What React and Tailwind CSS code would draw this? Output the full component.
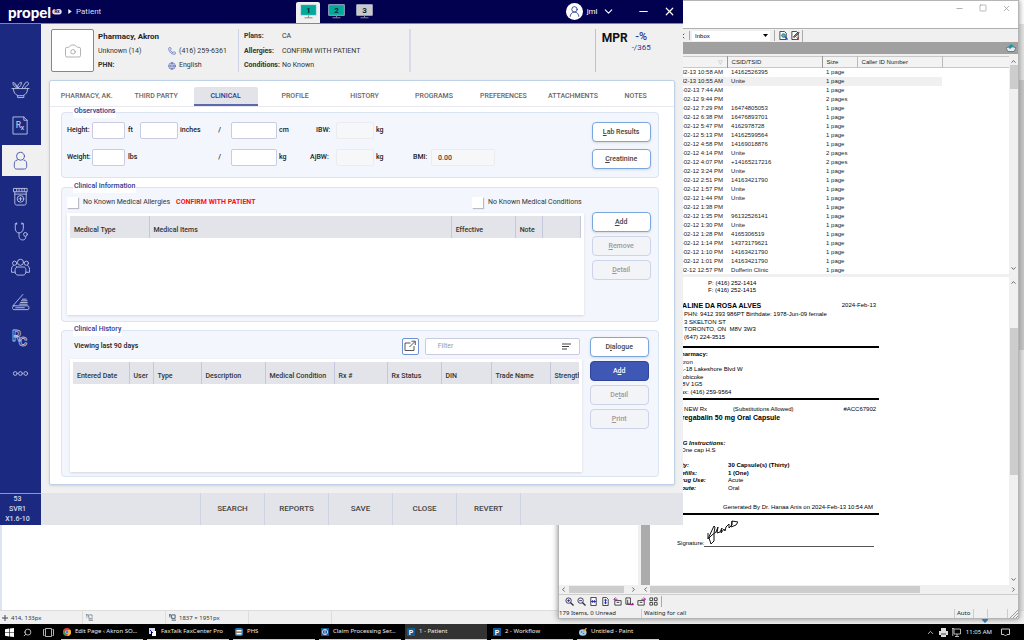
import { Camera, ChevronDown, ChevronLeft, ChevronRight, ChevronUp, Globe, Minus, Phone, Search, Square, UserRound, X } from "lucide-react";

const tabs = ["PHARMACY, AK.", "THIRD PARTY", "CLINICAL", "PROFILE", "HISTORY", "PROGRAMS", "PREFERENCES", "ATTACHMENTS", "NOTES"];

const faxes = [
  ["2024-02-13 10:58 AM", "14162526395", "1 page"],
  ["2024-02-13 10:55 AM", "Unite", "1 page"],
  ["2024-02-13 7:44 AM", "", "1 page"],
  ["2024-02-12 9:44 PM", "", "2 pages"],
  ["2024-02-12 7:29 PM", "16474805053", "1 page"],
  ["2024-02-12 6:38 PM", "16476893701", "1 page"],
  ["2024-02-12 5:47 PM", "4162978728", "1 page"],
  ["2024-02-12 5:13 PM", "14162599564", "1 page"],
  ["2024-02-12 4:58 PM", "14169018876", "1 page"],
  ["2024-02-12 4:14 PM", "Unite", "2 pages"],
  ["2024-02-12 4:07 PM", "+14165217216", "2 pages"],
  ["2024-02-12 3:24 PM", "Unite", "1 page"],
  ["2024-02-12 2:51 PM", "14163421790", "1 page"],
  ["2024-02-12 1:57 PM", "Unite", "1 page"],
  ["2024-02-12 1:44 PM", "Unite", "1 page"],
  ["2024-02-12 1:38 PM", "", "1 page"],
  ["2024-02-12 1:35 PM", "96132526141", "1 page"],
  ["2024-02-12 1:30 PM", "Unite", "1 page"],
  ["2024-02-12 1:28 PM", "4165306519", "1 page"],
  ["2024-02-12 1:14 PM", "14373179621", "1 page"],
  ["2024-02-12 1:10 PM", "14163421790", "1 page"],
  ["2024-02-12 1:01 PM", "14163421790", "1 page"],
  ["2024-02-12 12:57 PM", "Dufferin Clinic", "1 page"],
];

/* ---------- Sidebar icons ---------- */

function Glyph({ children }) {
  return (
    <svg viewBox="0 0 20 20" className="h-[19px] w-[19px]" fill="none" stroke="currentColor" strokeWidth="1" strokeLinecap="round" strokeLinejoin="round">
      {children}
    </svg>
  );
}

const sideItems = [
  {
    name: "Dispensary",
    icon: (
      <Glyph>
        <path d="M1 9h18M2.500 9c0 4 2 6.500 5 7.500h5c3-1 5-3.500 5-7.500M7 16.500v2h6.500v-2M11.500 9l3.500-6c1-1.600 3.800-.8 3.500 1-.1.900-.8 1.400-1.700 1.600L14 9M7 9C7 6 5 3.500 2 2.500 2 5 3 7.500 7 8.500M7 8c0-3 1-5 4-5.500 0 2.500-1 4.500-4 6M4 4.500l2.500 3" />
      </Glyph>
    ),
  },
  {
    name: "Prescriptions",
    icon: (
      <Glyph>
        <path d="M2.500 1h11l3.500 3.500V19H2.500zM13.500 1v3.500H17" />
        <text x="5" y="13" fontSize="9" stroke="none" fill="currentColor" fontWeight="500" fontFamily="Roboto, sans-serif">R<tspan x="10" y="15" fontSize="8">x</tspan></text>
      </Glyph>
    ),
  },
  {
    name: "Patients",
    active: true,
    icon: (
      <Glyph>
        <circle cx="10" cy="5.500" r="4.200" />
        <path d="M6.500 9.500C4 9.500 3.500 12 3.500 14v2.500c0 1.500 1 2.500 2.500 2.500h8c1.500 0 2.500-1 2.500-2.500V14c0-2-.5-4.500-3-4.500" />
      </Glyph>
    ),
  },
  {
    name: "Drugs",
    icon: (
      <Glyph>
        <path d="M3 1.500h14v3.500H3zM6 2v2.500M8.500 2v2.500M11.500 2v2.500M14 2v2.500M4 5v12c0 1.200.8 2 2 2h8c1.200 0 2-.8 2-2V5M4 7.500h12" />
        <circle cx="10" cy="12.500" r="3.500" />
        <path d="M10 10.800v3.400M8.300 12.500h3.400" />
      </Glyph>
    ),
  },
  {
    name: "Doctors",
    icon: (
      <Glyph>
        <path d="M6 1.500H4.500v5c0 3 1.500 5 4 5s4.500-2 4.500-5v-5h-1.500M6 1v1.500M11.500 1v1.500M8.500 11.500V15c0 5 7 5 7 1v-.5" />
        <circle cx="15.200" cy="13" r="2" />
      </Glyph>
    ),
  },
  {
    name: "Groups",
    icon: (
      <Glyph>
        <circle cx="10" cy="4.500" r="3.200" />
        <circle cx="3.800" cy="5.500" r="2.200" />
        <circle cx="16.200" cy="5.500" r="2.200" />
        <path d="M6 9.500h8c1.200.5 1.700 2 1.700 4 0 3-1 4.500-3 4.500H7.300c-2 0-3-1.500-3-4.500 0-2 .5-3.500 1.700-4zM2.500 8C.5 9 .3 11 .5 15h3.800M17.500 8c2 1 2.200 3 2 7h-3.800" />
      </Glyph>
    ),
  },
  {
    name: "Scan",
    icon: (
      <Glyph>
        <path d="M12.500 1.500L2 13.500M3 13.500h15c1.200 0 1.200 4 0 4H3c-2 0-2-4 0-4zM9 11.800h8M10 10h7M11 8.200h6M12 6.500h4M5 15.500h9" />
      </Glyph>
    ),
  },
  {
    name: "Reconciliation",
    icon: (
      <Glyph>
        <text x="1" y="13" fontSize="15" strokeWidth=".8" fontWeight="700" fontFamily="Roboto, sans-serif">R<tspan x="8" y="18" fontSize="14">C</tspan></text>
      </Glyph>
    ),
  },
  {
    name: "More",
    icon: (
      <Glyph>
        <circle cx="4.500" cy="10" r="2" />
        <circle cx="10" cy="10" r="2" />
        <circle cx="15.500" cy="10" r="2" />
      </Glyph>
    ),
  },
];

function Monitor({ n, fill }) {
  return (
    <svg viewBox="0 0 17 15" className="h-[15px] w-[17px]">
      <rect x=".75" y=".75" width="15.500" height="10.500" fill={fill} stroke="#d8dde6" strokeWidth=".7" />
      <path d="M8.500 11.500v2M4.500 13.800h8" stroke="#8a8d94" strokeWidth="1" />
      <text x="8.500" y="8.800" fontSize="8" fontWeight="700" textAnchor="middle" fill="#10252c" fontFamily="Roboto, sans-serif">{n}</text>
    </svg>
  );
}

function Accel({ text, at = 0 }) {
  return (
    <span>
      {text.slice(0, at)}
      <span className="underline">{text[at]}</span>
      {text.slice(at + 1)}
    </span>
  );
}

function Btn({ text, at, primary, disabled }) {
  const look = primary
    ? "border-[#2f459c] bg-[#3f57b5] text-white"
    : disabled
      ? "border-[#cdd3ea] bg-[#f3f4f7] text-[#9a9a9e]"
      : "border-[#79a7dd] bg-white text-[#444] shadow-sm";
  return (
    <button disabled={disabled} className={"h-[20px] w-[59px] rounded border text-[7px] leading-[8px] font-medium " + look}>
      <Accel text={text} at={at} />
    </button>
  );
}

function Panel({ title, className, children }) {
  return (
    <fieldset className={"min-w-0 rounded-sm border border-[#dbe5f2] bg-[#f3f6fc] " + className}>
      <legend className="ml-[11px] bg-white px-px pb-[3px] text-[7px] leading-[8px] font-medium text-[#2b3a8f]">{title}</legend>
      {children}
    </fieldset>
  );
}

const box = "h-[17px] w-full rounded-xs border border-[#c9cbe0] bg-white px-1 text-[7px]";
const roBox = "h-[17px] w-full rounded-xs border border-[#ececf0] bg-[#f6f7f9] px-1.5 text-[7px] text-[#444]";
const th = "border-r border-[#c5c7dc] px-1 pt-[7px] text-left font-medium whitespace-nowrap";

/* ---------- Propel window ---------- */

function TitleBar() {
  return (
    <header className="flex h-6 items-center border-b border-[#7f80b5] bg-[#010150] text-white">
      <div className="flex w-[68px] items-center gap-px pl-2">
        <span className="font-[Lato,sans-serif] text-[15px] leading-[16px] font-black">propel</span>
        <svg viewBox="0 0 10 7" className="h-[7px] w-[10px]">
          <rect x=".3" y="1" width="9.400" height="5.400" rx="2.700" fill="#dfe1f2" />
          <text x="5" y="5.400" fontSize="4.500" fontWeight="700" textAnchor="middle" fill="#010150" fontFamily="Roboto, sans-serif">Rx</text>
        </svg>
      </div>
      <svg viewBox="0 0 4 6" className="mr-1 h-[5px] w-[4px]"><path d="M0 0l4 3-4 3z" fill="#fff" /></svg>
      <span className="text-[8px] text-[#d9daea]">Patient</span>
      <div className="ml-[195px] flex items-end self-stretch">
        <button className="flex h-[21px] w-6 justify-center rounded-t-xs bg-[#f0f0f0] pt-[2px]"><Monitor n="1" fill="#00a99d" /></button>
        <button className="flex h-[21px] w-8 justify-center pt-[2px]"><Monitor n="2" fill="#00a99d" /></button>
        <button className="flex h-[21px] w-6 justify-center pt-[2px]"><Monitor n="3" fill="#c9c9cb" /></button>
      </div>
      <div className="ml-auto flex items-center pr-[7px]">
        <span className="flex h-[17px] w-[17px] items-center justify-center rounded-full bg-white text-[#2b3a8f]">
          <UserRound size={13} strokeWidth={1.6} />
        </span>
        <button className="ml-1 flex w-[50px] items-center gap-1 text-[8px]">
          jml <ChevronDown size={13} />
        </button>
        <button aria-label="Minimize" className="w-[26px]"><Minus size={13} /></button>
        <button aria-label="Close"><X size={13} strokeWidth={2.200} /></button>
      </div>
    </header>
  );
}

function PatientHeader() {
  return (
    <section className="flex h-14 pt-[5px] pl-[10px] text-[7px] leading-[9px] text-[#333]">
      <div className="flex h-[43px] w-[43px] items-center justify-center rounded-xs border border-[#7d82b0] bg-white text-[#999]">
        <Camera size={18} strokeWidth={1} />
      </div>
      <div className="ml-1 grid h-[43px] w-[141px] grid-cols-[70px_1fr] content-between border-r border-[#d0d2e8] pt-[3px] pb-[2px]">
        <h1 className="col-span-2 text-[8px] font-bold text-[#1f1f28]">Pharmacy, Akron</h1>
        <span>Unknown (14)</span>
        <span className="flex items-center gap-[3px]"><Phone size={8} className="text-[#4a5ab0]" />(416) 259-6361</span>
        <span className="font-bold">PHN:</span>
        <span className="flex items-center gap-[3px]"><Globe size={8} className="text-[#4a5ab0]" />English</span>
      </div>
      <dl className="grid h-[43px] w-[172px] grid-cols-[38px_1fr] content-between border-r-2 border-[#d9dbea] pt-[3px] pb-[2px] pl-[5px]">
        <dt className="font-bold">Plans:</dt><dd>CA</dd>
        <dt className="font-bold">Allergies:</dt><dd>CONFIRM WITH PATIENT</dd>
        <dt className="font-bold">Conditions:</dt><dd>No Known</dd>
      </dl>
      <div className="mr-[32px] ml-auto flex h-[43px] gap-1 border-l border-[#b9c0e6] pl-[6px]">
        <b className="pt-[2px] text-[12px] leading-[14px] text-[#111]">MPR</b>
        <div className="text-center text-[#2b3a8f]">
          <div className="pt-[2px] text-[11px] leading-[12px] font-medium">-%</div>
          <div className="text-[8px] leading-[9px]">-/365</div>
        </div>
      </div>
    </section>
  );
}

function Observations() {
  return (
    <Panel title="Observations" className="h-[71px]">
      <div className="flex justify-between pt-[4px] pr-[7px] pl-[5px] text-[7px] font-medium text-[#222]">
        <div className="grid grid-cols-[25px_33px_15px_38px_53px_46px_37px_22px_38px_39px_18px_64px] content-start items-center gap-y-[10px]">
          <label htmlFor="ft">Height:</label>
          <input id="ft" className={box} />
          <span className="pl-[3px]">ft</span>
          <input aria-label="inches" className={box} />
          <span className="flex justify-between pr-[10px] pl-[2px]"><span>inches</span><span>/</span></span>
          <input aria-label="cm" className={box} />
          <span className="pl-[2px]">cm</span>
          <label htmlFor="ibw" className="pl-[2px]">IBW:</label>
          <input id="ibw" readOnly className={roBox} />
          <span className="col-span-3 pl-[2px]">kg</span>

          <label htmlFor="lbs" className="col-start-1">Weight:</label>
          <input id="lbs" className={box} />
          <span className="pl-[3px]">lbs</span>
          <span className="col-span-2 pr-[10px] text-right">/</span>
          <input aria-label="kg" className={box} />
          <span className="pl-[2px]">kg</span>
          <label htmlFor="ajbw" className="-ml-1">AjBW:</label>
          <input id="ajbw" readOnly className={roBox} />
          <span className="pl-[2px]">kg</span>
          <label htmlFor="bmi">BMI:</label>
          <input id="bmi" readOnly defaultValue="0.00" className={roBox} />
        </div>
        <div className="flex flex-col gap-[7px]">
          <Btn text="Lab Results" />
          <Btn text="Creatinine" />
        </div>
      </div>
    </Panel>
  );
}

function ClinicalInformation() {
  const check = "h-[11px] w-[11px] appearance-none bg-white shadow-[1px_1px_1px_#b9bcc6]";
  return (
    <Panel title="Clinical Information" className="mt-[4px]">
      <div className="flex gap-2 pt-px pr-[7px] pb-[6px] pl-[5px] text-[7px]">
        <div className="min-w-0 flex-1">
          <div className="flex h-4 items-center pr-[2px] text-[#333]">
            <label className="flex items-center gap-[5px]"><input type="checkbox" className={check} />No Known Medical Allergies</label>
            <span className="ml-[6px] font-bold text-[#ff1111]">CONFIRM WITH PATIENT</span>
            <label className="ml-auto flex items-center gap-[5px]"><input type="checkbox" className={check} />No Known Medical Conditions</label>
          </div>
          <div className="mt-[3px] h-[102px] bg-white p-[3px] shadow-sm">
            <table className="w-full table-fixed border-collapse text-[#333]">
              <colgroup>
                <col className="w-[79px]" /><col /><col className="w-[64px]" /><col className="w-[27px]" /><col className="w-[38px]" />
              </colgroup>
              <thead>
                <tr className="h-[22px] bg-[#e3e4e9]">
                  <th className={th}>Medical Type</th>
                  <th className={th}>Medical Items</th>
                  <th className={th}>Effective</th>
                  <th className={th}>Note</th>
                  <th className={th} />
                </tr>
              </thead>
            </table>
          </div>
        </div>
        <div className="flex flex-col gap-1 pt-[18px]">
          <Btn text="Add" />
          <Btn text="Remove" disabled />
          <Btn text="Detail" disabled />
        </div>
      </div>
    </Panel>
  );
}

function ClinicalHistory() {
  return (
    <Panel title="Clinical History" className="mt-[3px]">
      <div className="flex gap-2 pt-px pr-[9px] pb-[4px] pl-2 text-[7px]">
        <div className="min-w-0 flex-1">
          <div className="flex h-[18px] items-center gap-[6px] pr-[2px]">
            <span className="flex-1 pl-1 font-medium text-[#222]">Viewing last 90 days</span>
            <button aria-label="Open in window" className="flex h-[17px] w-[17px] items-center justify-center rounded-xs border border-[#6f93d2] bg-white text-[#555]">
              <svg viewBox="0 0 12 12" className="h-3 w-3" fill="none" stroke="currentColor"><path d="M6.500 3H1v7.500h9V6M5.500 7L11 1.500M7.500 1.200H11.300V5" /></svg>
            </button>
            <div className="flex h-[17px] w-[155px] items-center rounded-xs border border-[#c9cbe0] bg-white pr-2 pl-3">
              <input aria-label="Filter" placeholder="Filter" className="min-w-0 flex-1 outline-none placeholder:text-[#999]" />
              <svg viewBox="0 0 9 7" className="h-[7px] w-[9px]"><path d="M0 1h9M0 3.500h7M0 6h5" stroke="#444" strokeWidth="1.200" /></svg>
            </div>
          </div>
          <div className="mt-[4px] h-[113px] bg-white p-[3px] shadow-sm">
            <table className="w-full table-fixed border-collapse overflow-hidden text-[#333]">
              <colgroup>
                <col className="w-[56px]" /><col className="w-[24px]" /><col className="w-[48px]" /><col className="w-[64px]" /><col className="w-[69px]" />
                <col className="w-[53px]" /><col className="w-[54px]" /><col className="w-[50px]" /><col className="w-[59px]" /><col />
              </colgroup>
              <thead>
                <tr className="h-[22px] bg-[#e3e4e9]">
                  {["Entered Date", "User", "Type", "Description", "Medical Condition", "Rx #", "Rx Status", "DIN", "Trade Name", "Strength"].map((h) => (
                    <th key={h} className={th + " overflow-hidden last:border-0 last:pr-0"}>{h}</th>
                  ))}
                </tr>
              </thead>
            </table>
          </div>
        </div>
        <div className="flex flex-col gap-1">
          <Btn text="Dialogue" at={1} />
          <Btn text="Add" at={1} primary />
          <Btn text="Detail" at={2} disabled />
          <Btn text="Print" disabled />
        </div>
      </div>
    </Panel>
  );
}

function PropelWindow() {
  return (
    <main className="absolute top-0 left-0 w-2/3 bg-[#f0f0f0] font-[Roboto,sans-serif]">
      <TitleBar />
      <div className="flex">
        <nav className="flex w-[41px] shrink-0 flex-col bg-[#1b2a80] pt-[50px] text-[#b6bddf]">
          <div className="flex h-[315px] flex-col justify-between pl-[2px]">
            {sideItems.map((s) => (
              <button
                key={s.name}
                title={s.name}
                className={"flex h-[31px] items-center justify-center pr-[3px] " + (s.active ? "bg-[#f0f0f0] text-[#4a5ab0]" : "")}
              >
                {s.icon}
              </button>
            ))}
          </div>
        </nav>
        <div className="min-w-0 flex-1">
          <PatientHeader />
          <div className="mr-2 mb-2 ml-2 h-[405px] rounded-xs border border-[#bfd2ea] bg-white pt-[6px] shadow-sm">
            <div className="grid grid-cols-[repeat(8,1fr)_56px] border-b border-[#e8e8ee] pr-[10px] pl-[2px]">
              {tabs.map((t) => (
                <button
                  key={t}
                  className={
                    "h-[19px] w-16 justify-self-center rounded-t-xs border-b-2 pt-[2px] text-[7px] font-medium whitespace-nowrap " +
                    (t === "CLINICAL" ? "border-[#5b68ad] bg-[#e3e4e9] text-[#2b3a8f]" : "border-transparent text-[#666]")
                  }
                >
                  {t}
                </button>
              ))}
            </div>
            <div className="pr-[15px] pl-[11px]">
              <Observations />
              <ClinicalInformation />
              <ClinicalHistory />
            </div>
          </div>
        </div>
      </div>
      <footer className="flex h-8 bg-[#e3e4e9]">
        <div className="w-[41px] border-t border-[#8f96c4] bg-[#1b2a80] pr-[6px] text-center text-[7px] leading-[10px] font-medium text-[#d5d9ef]">
          <div>53</div>
          <div>SVR1</div>
          <div>X1.6-10</div>
        </div>
        <div className="ml-[159px] flex border-l border-[#cdd3e4]">
          {["SEARCH", "REPORTS", "SAVE", "CLOSE", "REVERT"].map((b) => (
            <button key={b} className="w-16 border-r border-[#cdd3e4] text-[8px] font-medium text-[#444]">{b}</button>
          ))}
        </div>
      </footer>
    </main>
  );
}

/* ---------- Fax window ---------- */

function VScroll({ thumb }) {
  return (
    <div className="flex w-[9px] shrink-0 flex-col items-center bg-[#f0f0f0] py-[2px] text-[#555]">
      <ChevronUp size={7} strokeWidth={3} />
      <div className={thumb} />
      <ChevronDown size={7} strokeWidth={3} className="mt-auto" />
    </div>
  );
}

function HScroll({ thumb }) {
  return (
    <div className="flex h-[9px] shrink-0 items-center bg-[#f0f0f0] px-px text-[#555]">
      <ChevronLeft size={7} strokeWidth={3} />
      <div className={thumb} />
      <ChevronRight size={7} strokeWidth={3} className="ml-auto" />
    </div>
  );
}

function FaxList() {
  return (
    <div className="flex h-[218px] shrink-0 overflow-hidden bg-white">
      <div className="min-w-0 flex-1">
        <table className="w-full table-fixed border-collapse text-[6px] leading-[9px] text-[#222]">
          <colgroup>
            <col className="w-[168px]" /><col className="w-[95px]" /><col className="w-[35px]" /><col className="w-[85px]" /><col />
          </colgroup>
          <thead>
            <tr className="h-[11px] border-y border-[#c8c8c8] bg-[#f3f3f3] text-left">
              <th className="border-r border-[#999] pr-1 text-right font-normal text-[#aaa]">▽</th>
              <th className="border-r border-[#999] pl-1 font-normal">CSID/TSID</th>
              <th className="border-r border-[#bbb] pl-1 font-normal">Size</th>
              <th className="border-r border-[#bbb] pl-1 font-normal">Caller ID Number</th>
              <th />
            </tr>
          </thead>
          <tbody>
            {faxes.map(([date, from, size], i) => (
              <tr key={date} className="h-[9px]">
                <td className={"pr-[4px] text-right " + (i === 1 ? "bg-[#f0f0f0]" : "")}>{date}</td>
                <td className={"pl-1 " + (i === 1 ? "bg-[#f0f0f0]" : "")}>{from}</td>
                <td className={"pl-1 whitespace-nowrap " + (i === 1 ? "bg-[#f0f0f0]" : "")}>{size}</td>
                <td className={i === 1 ? "bg-[#f0f0f0]" : ""} />
                <td />
              </tr>
            ))}
          </tbody>
        </table>
      </div>
      <VScroll thumb="h-6 w-[8px] bg-[#cdcdcd]" />
    </div>
  );
}

function FaxPage() {
  return (
    <article className="w-[229px] pl-[27px] text-[6px] leading-[7px] text-black">
      <div className="pt-[3px] pl-[31px]">P: (416) 252-1414<br />F: (416) 252-1415</div>
      <div className="mt-[7px] flex justify-between pr-[3px] pl-[5px] leading-[9px]">
        <b className="text-[7px]">ALINE DA ROSA ALVES</b>
        <span>2024-Feb-13</span>
      </div>
      <div className="flex h-[31px] flex-col justify-between pt-px pl-[7px] whitespace-nowrap">
        <p>PHN: 9412 393 986PT Birthdate: 1978-Jun-09 female</p>
        <p>3 SKELTON ST</p>
        <p>TORONTO, ON&nbsp; M8V 3W3</p>
        <p>(647) 224-3515</p>
      </div>
      <hr className="mt-[5px] border-t-2 border-black" />
      <div className="mt-[3px] flex h-[45px] flex-col justify-between">
        <b>Pharmacy:</b>
        <p>Akron</p>
        <p>21-18 Lakeshore Blvd W</p>
        <p>Etobicoke</p>
        <p>M8V 1G5</p>
        <p>Fax: (416) 259-9564</p>
      </div>
      <hr className="mt-[2px] border-t-2 border-black" />
      <div className="mt-[6px] flex justify-between pr-[3px] pl-[7px]">
        <span>NEW Rx</span>
        <span>(Substitutions Allowed)</span>
        <span className="pl-6">#ACC67902</span>
      </div>
      <b className="block text-[7px] leading-[9px]">Pregabalin 50 mg Oral Capsule</b>
      <div className="mt-[18px]"><b><i>SIG Instructions:</i></b></div>
      <p className="pl-1">One cap H.S</p>
      <div className="mt-[8px] grid h-[30px] grid-cols-[51px_1fr] content-between">
        <b><i>Qty:</i></b><b>30 Capsule(s) (Thirty)</b>
        <b><i>Refills:</i></b><b>1 (One)</b>
        <b><i>Drug Use:</i></b><span>Acute</span>
        <b><i>Route:</i></b><span>Oral</span>
      </div>
      <div className="mt-3 pr-[6px] text-right whitespace-nowrap">Generated By Dr. Hanaa Anis on 2024-Feb-13 10:54 AM</div>
      <hr className="mt-[2px] border-t-2 border-black" />
      <div className="flex h-[32px] items-end pr-[5px]">
        <span className="w-[27px]">Signature:</span>
        <div className="flex-1 border-b border-[#555] pl-[3px]">
          <svg viewBox="0 0 31 28" className="h-[28px] w-[31px]" fill="none" stroke="#111" strokeWidth="1">
            <path d="M1 15v6l5-11 1-2 1 1-1 6v8l-3 3-2-6 3-3 4-3 2-5-1 6 3-1 2-4-1 5 3-4 1 2 1-4 3-3v4l3-3V3l6 1-2 3-5 2 1-6" />
          </svg>
        </div>
      </div>
    </article>
  );
}

function FaxWindow() {
  const tool = "h-[9px] w-[9px]";
  return (
    <section className="absolute top-0 right-[5px] bottom-[5px] left-[54.5%] flex flex-col border border-[#b5b5b5] bg-[#f0f0f0] font-['Liberation_Sans',sans-serif] shadow-[0_0_6px_#888]">
      <div className="flex h-[27px] shrink-0 items-start justify-end gap-[15px] bg-white pt-[3px] pr-[7px] text-[#999]">
        <button aria-label="Minimize"><Minus size={9} /></button>
        <button aria-label="Maximize"><Square size={8} /></button>
        <button aria-label="Close"><X size={9} /></button>
      </div>
      <div className="flex h-[14px] shrink-0 items-center border-t border-[#b0b0b0] pl-[120px]">
        <ChevronLeft size={8} />
        <span className="mx-[2px] h-[9px] border-l border-[#aaa]" />
        <div className="flex w-[78px] items-center bg-white pr-[2px]">
          <select aria-label="Folder" className="h-[10px] flex-1 appearance-none pl-[3px] text-[6px] leading-[10px]">
            <option>Inbox</option>
          </select>
          <svg viewBox="0 0 5 3" className="h-[3px] w-[5px]"><path d="M0 0h5L2.500 3z" /></svg>
        </div>
        <span className="mx-[4px] h-[11px] border-l border-[#aaa]" />
        <svg viewBox="0 0 10 10" className={tool} fill="none" stroke="#333"><path d="M1 .5h5l2 2v7H1z" fill="#fff" /><circle cx="5" cy="5" r="2" fill="#35c3c9" stroke="#2a6f8f" /><path d="M6.500 6.500L9.500 9.500" stroke="#1f3fc0" strokeWidth="1.500" /></svg>
        <svg viewBox="0 0 10 10" className="ml-[3px] h-[9px] w-[9px]" fill="none" stroke="#333"><path d="M1 .5h5l2 2v7H1z" fill="#fff" /><path d="M3 6l5-5 1 1-5 5H3z" fill="#999" /><path d="M6 7l3 2.500M9 7L6 9.500" stroke="#c23" /></svg>
        <span className="mx-[2px] h-[12px] border-l border-[#aaa]" />
      </div>
      <div className="mb-[2px] flex h-[12px] shrink-0 items-center justify-end bg-[#a0a0a0] pr-[2px]">
        <svg viewBox="0 0 10 8" className="h-[8px] w-[10px]"><path d="M0 4l5-2 5 2-2 3.500H2z" fill="#e8eef0" stroke="#445" strokeWidth=".6" /><path d="M5 0l3 2-4 3-2-2z" fill="#1d9aa5" /></svg>
      </div>
      <FaxList />
      <div className="mt-[3px] flex min-h-0 flex-1 gap-[3px]">
        <div className="flex w-[79px] flex-col bg-white">
          <div className="flex-1" />
          <HScroll thumb="ml-[2px] h-[7px] w-[55px] bg-[#cdcdcd]" />
        </div>
        <div className="flex min-w-0 flex-1 flex-col">
          <div className="flex min-h-0 flex-1 border-l-9 border-[#ababab] bg-white">
            <div className="min-w-0 flex-1 overflow-hidden"><FaxPage /></div>
            <VScroll thumb="mt-[42px] h-[147px] w-[8px] bg-[#cdcdcd]" />
          </div>
          <HScroll thumb="ml-px h-[7px] w-[72%] bg-[#cdcdcd]" />
        </div>
      </div>
      <div className="flex h-[14px] shrink-0 items-center gap-[3px] border-t border-[#ccc] pl-[6px]">
        {[
          <g key="a"><circle cx="4" cy="4" r="3" fill="#eef" /><path d="M2.500 4h3M4 2.500v3" stroke="#22b" /><path d="M6 6l3.500 3.500" strokeWidth="1.500" /></g>,
          <g key="b"><circle cx="4" cy="4" r="3" fill="#eef" /><path d="M2.500 4h3" stroke="#22b" /><path d="M6 6l3.500 3.500" strokeWidth="1.500" /></g>,
          <g key="c"><path d="M2 .5h6v9H2z" fill="#fff" /><path d="M2 5h6M4 3.500v3M6 3.500v3" stroke="#22b" /></g>,
          <g key="d"><path d="M2 .5h4l2 2v7H2z" fill="#fff" /><path d="M5 2v6M3.500 3.500h3M3.500 6.500h3" stroke="#22b" /></g>,
          <g key="e"><path d="M2 4h7v5H2zM4 6h3" fill="#fff" /><path d="M1 2.500h4M3 .5L1 2.500l2 2" stroke="#a1a" /></g>,
          <g key="f"><path d="M1 1h5v7H1zM3 3v5h4" fill="#fff" /><path d="M6 8.500h3.500M8 7l1.500 1.500" stroke="#a1a" strokeWidth="1.500" /></g>,
          <g key="g"><path d="M1 4h7v5H1zM3 6h3" fill="#fff" /><path d="M5 2.500h4M7.500.5l2 2-2 2" stroke="#a1a" /></g>,
          <g key="h"><path d="M1 1h3v3H1zM6 1h3v3H6zM1 6h3v3H1zM6 6h3v3H6z" fill="#fff" /></g>,
        ].map((g) => (
          <svg key={g.key} viewBox="0 0 10 10" className={tool} fill="none" stroke="#333">{g}</svg>
        ))}
        <span className="h-[11px] border-l border-[#aaa]" />
      </div>
      <div className="flex h-[10px] shrink-0 items-center font-['Noto_Sans',sans-serif] text-[6px] leading-[9px] whitespace-nowrap text-[#222]">
        <span className="w-[83px] border-r border-[#ccc]">179 Items, 0 Unread</span>
        <span className="flex-1 pl-[2px]">Waiting for call</span>
        <span className="w-[20px] border-x border-[#ccc] pl-[2px]">Auto</span>
        <span className="h-[9px] w-[14px] border-r border-[#ccc]" />
        <span className="h-[9px] w-[20px] border-r border-[#ccc]" />
        <svg viewBox="0 0 10 9" className="h-[9px] w-[10px]" stroke="#999"><path d="M2 9l8-8M5 9l5-5M8 9l2-2" /></svg>
      </div>
    </section>
  );
}

/* ---------- Paint, behind both ---------- */

function PaintWindow() {
  return (
    <div className="flex h-full flex-col bg-white">
      <div className="flex flex-1 justify-between">
        <div className="w-[2px] bg-[#dbe4f2]" />
        <div className="flex w-[5px] flex-col bg-[#e4e4e4]">
          <div className="h-6 bg-white" />
          <div className="mt-[56px] h-[270px] bg-[#c6c6c6]" />
        </div>
      </div>
      <div className="flex h-[14px] shrink-0 items-center border-t border-[#ddd] bg-[#f0f0f0] font-['Noto_Sans',sans-serif] text-[6px] leading-[8px] text-[#333]">
        <span className="flex h-full w-[83px] items-center gap-[3px] border-r border-[#ddd] pl-[2px]">
          <svg viewBox="0 0 6 6" className="h-[6px] w-[6px]" stroke="#446"><path d="M3 0v6M0 3h6" /></svg>
          414, 133px
        </span>
        <span className="flex h-full w-[83px] items-center border-r border-[#ddd] pl-[3px]">
          <svg viewBox="0 0 8 8" className="h-[7px] w-[7px]" fill="none" stroke="#567"><path d="M0 1h2M1 0v4M3 1h4v4H3z" strokeDasharray="1 .5" /><path d="M3 7h5" /></svg>
        </span>
        <span className="flex h-full w-[83px] items-center gap-[3px] border-r border-[#ddd] pl-[3px]">
          <svg viewBox="0 0 8 8" className="h-[7px] w-[7px]" fill="none" stroke="#356"><path d="M0 1h2M1 0v4M3 1h4v4H3zM3 7h5" /></svg>
          1837 × 1951px
        </span>
        <span className="h-full w-[83px] border-r border-[#ddd]" />
        <span className="mr-[36px] ml-auto h-full w-[6px] pt-[6px]">
          <svg viewBox="0 0 6 6" className="h-[6px] w-[6px]"><path d="M0 0h6v3L3 6 0 3z" fill="#0a6fc2" /></svg>
        </span>
      </div>
    </div>
  );
}

/* ---------- Taskbar ---------- */

const PIcon = (
  <svg viewBox="0 0 8 8" className="h-[8px] w-[8px]"><rect width="8" height="8" fill="#0d5a94" /><text x="4" y="6.500" fontSize="7" fontWeight="700" textAnchor="middle" fill="#fff" fontFamily="Roboto, sans-serif">P</text></svg>
);

const tasks = [
  {
    label: "Edit Page ‹ Akron SO...",
    icon: (
      <svg viewBox="0 0 8 8" className="h-[8px] w-[8px]"><circle cx="4" cy="4" r="4" fill="#e33b2e" /><path d="M.5 2L4 8a4 4 0 0 1-3.500-6z" fill="#2ba24c" /><path d="M8 4a4 4 0 0 1-4 4l2-4-1-2h2.500z" fill="#fbc116" /><circle cx="4" cy="4" r="1.800" fill="#fff" /><circle cx="4" cy="4" r="1.400" fill="#3b7de8" /></svg>
    ),
  },
  {
    label: "FaxTalk FaxCenter Pro",
    icon: (
      <svg viewBox="0 0 8 8" className="h-[8px] w-[8px]"><path d="M0 0h6v3H2v3H0z" fill="#d7d9ef" /><path d="M3 3h4v5H3z" fill="#fff" /><path d="M1 2l3 3" stroke="#23279a" /></svg>
    ),
  },
  {
    label: "PHS",
    icon: (
      <svg viewBox="0 0 8 8" className="h-[8px] w-[8px]"><rect width="8" height="8" rx="2" fill="#2b77ad" /><path d="M1.500 2h5v1.500h-5zM1.500 5h5v1.500h-5z" fill="#fff" /><path d="M1 3.800h6v.8H1z" fill="#e58a3c" /></svg>
    ),
  },
  {
    label: "Claim Processing Ser...",
    icon: (
      <svg viewBox="0 0 8 8" className="h-[8px] w-[8px]"><rect width="8" height="8" fill="#0d5a94" /><circle cx="4" cy="4" r="2.600" fill="none" stroke="#dce" /><path d="M4 1.500v5" stroke="#dce" /></svg>
    ),
  },
  { label: "1 - Patient", active: true, icon: PIcon },
  { label: "2 - Workflow", icon: PIcon },
  {
    label: "Untitled - Paint",
    icon: (
      <svg viewBox="0 0 8 8" className="h-[8px] w-[8px]"><ellipse cx="3.800" cy="4.500" rx="3.800" ry="3.200" fill="#9fd0ee" /><circle cx="2.500" cy="4" r=".8" fill="#d33" /><circle cx="4.500" cy="5.500" r=".8" fill="#2a4" /><path d="M4 4l3.500-4" stroke="#e9a13b" strokeWidth="1.200" /></svg>
    ),
  },
];

function Taskbar() {
  return (
    <div className="flex h-4 shrink-0 items-center bg-black font-['Noto_Sans',sans-serif] text-[6px] text-[#eee]">
      <button aria-label="Start" className="flex w-[19px] pl-[5px]">
        <svg viewBox="0 0 9 9" className="h-[9px] w-[9px]" fill="#fff"><path d="M0 1.200l4-.6v3.600H0zM4.600.5L9 0v4.200H4.600zM0 4.800h4v3.600l-4-.6zM4.600 4.800H9V9l-4.400-.6z" /></svg>
      </button>
      <button aria-label="Search" className="w-[24px] pl-[4px]"><Search size={9} className="-scale-x-100" /></button>
      <button aria-label="Task view" className="w-[18px]">
        <svg viewBox="0 0 11 9" className="h-[9px] w-[11px]" fill="none" stroke="#ddd" strokeWidth=".8"><path d="M2.500.5h6v8h-6zM1.500 1.500H.5v6h1M9.500 1.500h1v6h-1" /></svg>
      </button>
      <div className="flex gap-1 self-stretch">
        {tasks.map((t) => (
          <button
            key={t.label}
            className={"flex w-[82px] items-center gap-[4px] overflow-hidden border-b border-[#f0c4a4] pl-[2px] whitespace-nowrap " + (t.active ? "bg-[#333]" : "")}
          >
            {t.icon}
            {t.label}
          </button>
        ))}
      </div>
      <div className="ml-auto flex items-center gap-[4px] pr-[14px]">
        <ChevronUp size={9} />
        <svg viewBox="0 0 9 9" className="h-[9px] w-[9px]" fill="#ddd"><path d="M2 0h5v3H2zM0 3h9v4H0zM2 6h5v3H2z" /><path d="M2 6h5" stroke="#000" strokeWidth=".7" /></svg>
        <svg viewBox="0 0 9 9" className="h-[9px] w-[9px]" fill="none" stroke="#ddd" strokeWidth=".8"><path d="M2 1h6.500v5H2zM3 8.500h4M5 6v2.500M0 .5h2M.8.500V8" /></svg>
        <span className="pl-px text-[6px]">11:05 AM</span>
        <svg viewBox="0 0 9 9" className="ml-[5px] h-[9px] w-[9px]" fill="none" stroke="#ddd" strokeWidth=".9"><path d="M.5 1h8v5.500H6L4.500 8 3 6.500H.5z" /></svg>
      </div>
    </div>
  );
}

export default function App() {
  return (
    <div className="flex h-screen flex-col overflow-hidden">
      <div className="relative min-h-0 flex-1 overflow-hidden">
        <PaintWindow />
        <FaxWindow />
        <PropelWindow />
      </div>
      <Taskbar />
    </div>
  );
}
